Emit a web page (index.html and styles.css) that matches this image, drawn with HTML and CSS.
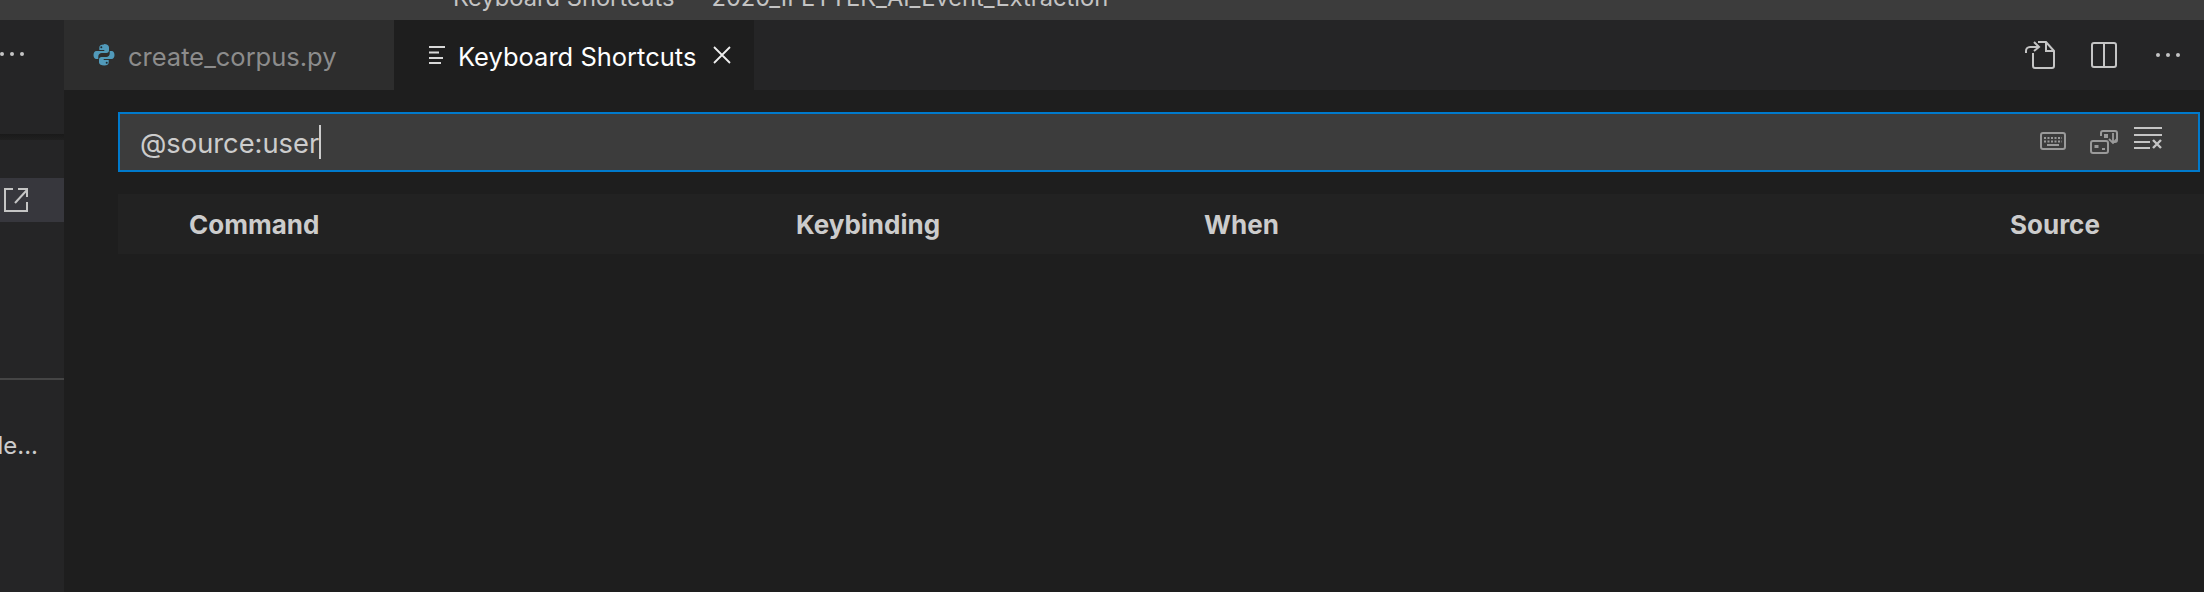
FILE: index.html
```html
<!DOCTYPE html>
<html lang="en">
<head>
  <meta charset="UTF-8">
  <title>Keyboard Shortcuts</title>
  <link rel="stylesheet" href="styles.css">
</head>
<body>

  <div class="titlebar">
    <span class="titlebar-text">Keyboard Shortcuts — 2020_IFETTEK_AI_Event_Extraction</span>
  </div>

  <div class="workbench">
    <div class="sidebar">
      <div class="side-head">
        <span class="dots"><i></i><i></i><i></i></span>
      </div>
      <div class="side-shadow"></div>
      <div class="side-row">
        <svg class="side-icon" width="24" height="24" viewBox="0 0 24 24" fill="none" stroke="#c5c5c5" stroke-width="2">
          <path d="M9 1H1v22h22v-9"/>
          <path d="M11 15L22.500 2.500"/>
          <path d="M14 1h9v8"/>
        </svg>
      </div>
      <div class="side-rule"></div>
      <div class="side-text">Toggle...</div>
    </div>

    <div class="main">
      <div class="tabs">
        <div class="tab tab-file">
          <svg class="py-icon" width="22" height="22" viewBox="0 0 22 22">
            <path fill="#519aba" d="M10.800 0.500c-3 0-4.500 1.100-4.500 3v2.500h5v1H3.500C1.500 7 0.500 8.800 0.500 11s1 4 2.800 4h2v-2.500c0-2 1.500-3.500 3.500-3.500h4.700c1.500 0 2.500-1 2.500-2.500v-3c0-2-2-3.500-4.700-3.500z"/>
            <path fill="#519aba" d="M11.200 21.500c3 0 4.500-1.100 4.500-3V16h-5v-1h7.800c2 0 3-1.800 3-4s-1-4-2.800-4h-2v2.500c0 2-1.500 3.500-3.500 3.500H8.500C7 13 6 14 6 15.500v3c0 2 2.500 3 5.200 3z"/>
            <circle cx="8.300" cy="3.200" r="1" fill="#1e2a30"/>
            <circle cx="13.700" cy="18.800" r="1" fill="#1e2a30"/>
          </svg>
          <span>create_corpus.py</span>
        </div>
        <div class="tab tab-active">
          <svg class="lines-icon" width="16" height="20" viewBox="0 0 16 20" fill="none" stroke="#d8d8d8" stroke-width="2">
            <path d="M0 2h16M0 7.500h10M0 13h14M0 18h12"/>
          </svg>
          <span>Keyboard Shortcuts</span>
          <svg class="close-icon" width="18" height="18" viewBox="0 0 18 18" fill="none" stroke="#eeeeee" stroke-width="1.800">
            <path d="M1 1l16 16M17 1L1 17"/>
          </svg>
        </div>
        <div class="tab-actions">
          <svg width="32" height="30" viewBox="0 0 32 30" fill="none" stroke="#c5c5c5" stroke-width="2">
            <path d="M9 13v13c0 1 .6 2 2 2h17c1 0 2-1 2-2V11l-8-9h-8"/>
            <path d="M22 2v9h8"/>
            <path d="M2 13v-2c0-2 1.500-4 4-4h9"/>
            <path d="M10 2l5 5-5 4"/>
          </svg>
          <svg width="26" height="26" viewBox="0 0 26 26" fill="none" stroke="#c5c5c5" stroke-width="2">
            <rect x="1" y="1" width="24" height="24" rx="2"/>
            <path d="M13 1v24"/>
          </svg>
          <span class="dots"><i></i><i></i><i></i></span>
        </div>
      </div>

      <div class="editor">
        <div class="search-box">
          <span class="search-text">@source:user</span><span class="caret"></span>
          <div class="search-actions">
            <svg class="key-icon" width="26" height="18" viewBox="0 0 26 18" fill="none" stroke="#9a9a9a" stroke-width="2">
              <rect x="1" y="1" width="24" height="16" rx="2"/>
              <path d="M4 6h18M4 9.500h18" stroke-dasharray="2 1.500"/>
              <path d="M7 13h12"/>
            </svg>
            <svg class="record-icon" width="28" height="24" viewBox="0 0 28 24" fill="none" stroke="#9a9a9a" stroke-width="2">
              <rect x="1" y="11" width="17" height="12" rx="2"/>
              <path d="M11 6V3c0-1 .6-2 2-2h12c1 0 2 1 2 2v7c0 1-1 2-2 2h-2"/>
              <path d="M4.500 15h4v3h-4zM12 18h3v2h-3z" fill="#9a9a9a" stroke="none"/>
              <path d="M14 4h4v4h-4z" fill="#9a9a9a" stroke="none"/>
              <path d="M23 3v9M19 9l4 4 4-4" stroke-width="1.800"/>
            </svg>
            <svg class="clear-icon" width="28" height="22" viewBox="0 0 28 22" fill="none" stroke="#c5c5c5" stroke-width="2">
              <path d="M0 1h28M0 8h28M0 15h16M0 21h16"/>
              <path d="M19 13l8 8M27 13l-8 8" stroke-width="2.400"/>
            </svg>
          </div>
        </div>

        <div class="table-head">
          <span class="col col-command">Command</span>
          <span class="col col-key">Keybinding</span>
          <span class="col col-when">When</span>
          <span class="col col-source">Source</span>
        </div>
      </div>
    </div>
  </div>

</body>
</html>
```

FILE: styles.css
```css
* {
  box-sizing: border-box;
}

html, body {
  height: 100%;
}

body {
  margin: 0;
  font-family: 'Inter', sans-serif;
  background: #1e1e1e;
  color: #cccccc;
  overflow: hidden;
  display: flex;
  flex-direction: column;
}

.titlebar {
  height: 20px;
  flex: none;
  background: #3c3c3c;
  overflow: hidden;
  padding-left: 453px;
}

.titlebar-text {
  display: block;
  margin-top: -17px;
  font-size: 23.700px;
  line-height: 30px;
  color: #c4c4c4;
  white-space: nowrap;
}

.workbench {
  flex: 1;
  display: flex;
  min-height: 0;
}

.sidebar {
  width: 64px;
  flex: none;
  background: #252526;
  overflow: hidden;
}

.side-head {
  height: 114px;
  display: flex;
  justify-content: flex-end;
  padding: 32px 40px 0 0;
}

.side-shadow {
  height: 6px;
  background: linear-gradient(#1a1a1a, #202020);
}

.side-row {
  height: 44px;
  margin-top: 38px;
  background: #37373d;
  display: flex;
  align-items: center;
  padding-left: 4px;
}

.side-rule {
  height: 2px;
  margin-top: 156px;
  background: #454545;
}

.side-text {
  margin-top: 51px;
  display: flex;
  justify-content: flex-end;
  padding-right: 26px;
  font-size: 24px;
  line-height: 30px;
  white-space: nowrap;
}

.dots {
  display: flex;
  gap: 6px;
  height: 4px;
}

.dots i {
  width: 4px;
  height: 4px;
  border-radius: 50%;
  background: #c5c5c5;
}

.main {
  flex: 1;
  min-width: 0;
  display: flex;
  flex-direction: column;
}

.tabs {
  height: 70px;
  flex: none;
  background: #252526;
  display: flex;
}

.tab {
  display: flex;
  align-items: center;
  font-size: 25.500px;
  white-space: nowrap;
}

.tab span {
  margin-top: 3px;
}

.tab-file {
  width: 330px;
  background: #2d2d2d;
  color: #8c8c8c;
  padding-left: 29px;
}

.py-icon {
  margin-right: 13px;
}

.tab-active {
  width: 360px;
  background: #1e1e1e;
  color: #ffffff;
  padding-left: 35px;
}

.lines-icon {
  margin-right: 13px;
}

.close-icon {
  margin-left: 17px;
}

.tab-actions {
  margin-left: auto;
  display: flex;
  align-items: center;
  padding-right: 24px;
}

.tab-actions svg:first-child {
  margin-right: 35px;
}

.tab-actions .dots {
  margin-left: 39px;
}

.editor {
  flex: 1;
  padding: 22px 4px 0 54px;
}

.search-box {
  height: 60px;
  background: #3c3c3c;
  border: 2px solid #007acc;
  display: flex;
  align-items: center;
  padding-left: 20px;
  font-size: 27.300px;
}

.search-text {
  color: #cccccc;
  margin-top: 3px;
}

.caret {
  width: 2px;
  height: 34px;
  background: #cccccc;
}

.search-actions {
  margin-left: auto;
  display: flex;
  align-items: center;
  padding-right: 36px;
}

.key-icon {
  margin: 0 24px 2px 0;
}

.record-icon {
  margin-right: 16px;
}

.clear-icon {
  margin-bottom: 8px;
}

.table-head {
  height: 60px;
  margin-top: 22px;
  margin-right: -4px;
  background: #222222;
  display: flex;
  align-items: center;
  font-size: 26px;
  font-weight: 700;
}

.col {
  margin-top: 1px;
}

.col-command {
  margin-left: 71px;
  width: 607px;
}

.col-key {
  width: 408px;
}

.col-when {
  width: 806px;
}
```
